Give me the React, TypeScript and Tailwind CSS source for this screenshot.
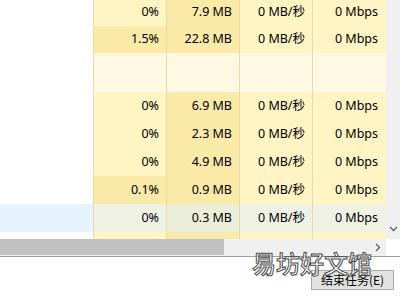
import React from "react";

type Row = {
  cpu: string;
  mem: string;
  disk: string;
  net: string;
  cpuHot?: boolean;
  h: string;
  kind?: "group" | "hover";
};

const rows: Row[] = [
  { cpu: "0%", mem: "7.9 MB", disk: "0 MB/秒", net: "0 Mbps", h: "h-[28px]" },
  { cpu: "1.5%", mem: "22.8 MB", disk: "0 MB/秒", net: "0 Mbps", cpuHot: true, h: "h-[27px]" },
  { cpu: "", mem: "", disk: "", net: "", h: "h-[39px]", kind: "group" },
  { cpu: "0%", mem: "6.9 MB", disk: "0 MB/秒", net: "0 Mbps", h: "h-[28px]" },
  { cpu: "0%", mem: "2.3 MB", disk: "0 MB/秒", net: "0 Mbps", h: "h-[28px]" },
  { cpu: "0%", mem: "4.9 MB", disk: "0 MB/秒", net: "0 Mbps", h: "h-[28px]" },
  { cpu: "0.1%", mem: "0.9 MB", disk: "0 MB/秒", net: "0 Mbps", cpuHot: true, h: "h-[28px]" },
  { cpu: "0%", mem: "0.3 MB", disk: "0 MB/秒", net: "0 Mbps", h: "h-[28px]", kind: "hover" },
  { cpu: "", mem: "", disk: "", net: "", h: "h-[28px]" },
];

function Cell({ text, bg, last }: { text: string; bg: string; last?: boolean }) {
  return (
    <div
      className={`${last ? "flex-1 pr-[8px]" : "w-[73px] pr-[7px]"} ${bg} h-full flex items-center justify-end border-l border-[#e9d9a4]`}
    >
      {text}
    </div>
  );
}

function TableRow({ r }: { r: Row }) {
  const light = "bg-[#fff4c4]";
  const hot = "bg-[#f9eaa8]";
  if (r.kind === "group") {
    return (
      <div className={`flex ${r.h}`}>
        <div className="w-[93px] bg-white" />
        <Cell text="" bg="bg-[#fff8e2]" />
        <Cell text="" bg="bg-[#fff8e2]" />
        <Cell text="" bg="bg-[#fff8e2]" />
        <Cell text="" bg="bg-[#fff8e2]" last />
      </div>
    );
  }
  if (r.kind === "hover") {
    return (
      <div className={`flex ${r.h}`}>
        <div className="w-[93px] bg-[#e5f3fd]" />
        <Cell text={r.cpu} bg="bg-[#eff1e5]" />
        <Cell text={r.mem} bg="bg-[#ebeed9]" />
        <Cell text={r.disk} bg="bg-[#eff1e5]" />
        <Cell text={r.net} bg="bg-[#eff1e5]" last />
      </div>
    );
  }
  return (
    <div className={`flex ${r.h}`}>
      <div className="w-[93px] bg-white" />
      <Cell text={r.cpu} bg={r.cpuHot ? hot : light} />
      <Cell text={r.mem} bg={hot} />
      <Cell text={r.disk} bg={light} />
      <Cell text={r.net} bg={light} last />
    </div>
  );
}

export default function App() {
  return (
    <div className="relative w-[400px] h-[300px] overflow-hidden bg-white text-[12.5px] text-black font-['Noto_Sans','Noto_Sans_CJK_SC',sans-serif]">
      <div className="flex h-[239px]">
        <div className="w-[386px] h-full overflow-hidden">
          <div className="-mt-[2px]">
            {rows.map((r, i) => (
              <TableRow key={i} r={r} />
            ))}
          </div>
        </div>
        <div className="flex-1 bg-[#f0f0f0] flex flex-col justify-end items-center pb-[7px]">
          <svg width="9" height="6" viewBox="0 0 9 6">
            <polyline points="1,1 4.5,4.5 8,1" fill="none" stroke="#606060" strokeWidth="1.3" />
          </svg>
        </div>
      </div>

      <div className="flex h-[17px]">
        <div className="w-[386px] flex bg-[#f0f0f0]">
          <div className="w-[224px] h-[16px] bg-[#c1c1c1]" />
          <div className="flex-1 flex items-center justify-end pr-[5px] h-[16px]">
            <svg width="6" height="9" viewBox="0 0 6 9">
              <polyline points="1,1 4.5,4.5 1,8" fill="none" stroke="#606060" strokeWidth="1.3" />
            </svg>
          </div>
        </div>
        <div className="flex-1 bg-white" />
      </div>
      <div className="h-[1px] bg-[#a0a0a0]" />

      <div className="flex justify-end pr-[6px] pt-[13px]">
        <button className="w-[83px] h-[20px] bg-[#e1e1e1] border border-[#adadad] text-[12px] leading-none flex items-center justify-center font-['Noto_Sans_CJK_SC',sans-serif]">
          结束任务(E)
        </button>
      </div>

      <div className="absolute left-[252px] top-[251px] text-[24px] leading-none tracking-[0px] text-white font-medium [-webkit-text-stroke:1px_#4a4a4a] font-['Noto_Sans_CJK_SC',sans-serif]">
        易坊好文馆
      </div>
    </div>
  );
}
